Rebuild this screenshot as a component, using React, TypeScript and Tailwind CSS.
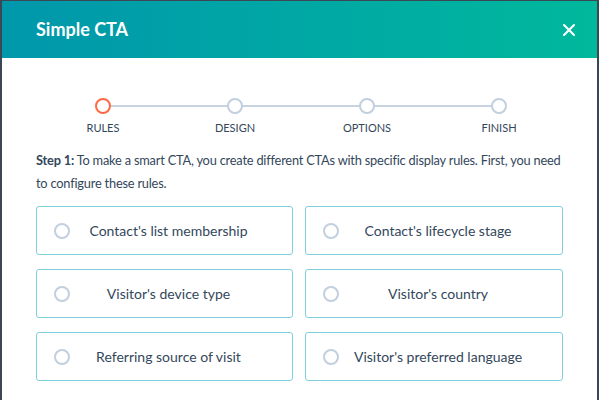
import { X } from 'lucide-react';

const steps = ['RULES', 'DESIGN', 'OPTIONS', 'FINISH'];

const rules = [
  "Contact's list membership",
  "Contact's lifecycle stage",
  "Visitor's device type",
  "Visitor's country",
  'Referring source of visit',
  "Visitor's preferred language",
];

export default function App() {
  return (
    <div
      className="flex h-[400px] w-[599px] overflow-hidden bg-[#3b4754] pt-px"
      style={{ fontFamily: 'Lato, "Open Sans", sans-serif' }}
    >
      <div className="ml-[2px] flex h-full w-[595px] flex-col bg-white">
        <div className="flex h-[57px] shrink-0 items-center justify-between bg-gradient-to-r from-[#0097ab] to-[#00b89c] pl-[34px] pr-[18px]">
          <h1 className="text-[18px] font-bold text-white">Simple CTA</h1>
          <X size={20} strokeWidth={2.5} className="text-white" />
        </div>

        <div className="px-[34px]">
          <div className="relative mt-[40px] ml-px grid w-[528px] grid-cols-4">
            <div className="absolute top-[7px] left-[66px] h-[2px] w-[396px] bg-[#c7d3e1]" />
            {steps.map((s, i) => (
              <div key={s} className="relative flex flex-col items-center">
                <span
                  className={
                    i === 0
                      ? 'h-4 w-4 rounded-full border-2 border-[#ff6a45] bg-white'
                      : 'h-4 w-4 rounded-full border-2 border-[#c2cfdf] bg-white'
                  }
                />
                <span className="mt-[7px] text-[11px] leading-[14px] text-[#33475b]">{s}</span>
              </div>
            ))}
          </div>

          <p className="mt-[14px] -mr-[4px] text-[12.8px] leading-[23px] tracking-[-0.2px] text-[#33475b]">
            <span className="font-bold">Step 1:</span> To make a smart CTA, you create different
            CTAs with specific display rules. First, you need to configure these rules.
          </p>

          <div className="mt-[11px] grid grid-cols-[257px_258px] gap-x-[12px] gap-y-[14px]">
            {rules.map((r) => (
              <div
                key={r}
                className="flex h-[49px] items-center rounded-[3px] border border-[#7fcfdc] pl-[17px] pr-[25px]"
              >
                <span className="h-4 w-4 shrink-0 rounded-full border-2 border-[#c2cfdf]" />
                <span className="flex-1 text-center text-[14px] text-[#33475b]">{r}</span>
              </div>
            ))}
          </div>
        </div>
      </div>
    </div>
  );
}
